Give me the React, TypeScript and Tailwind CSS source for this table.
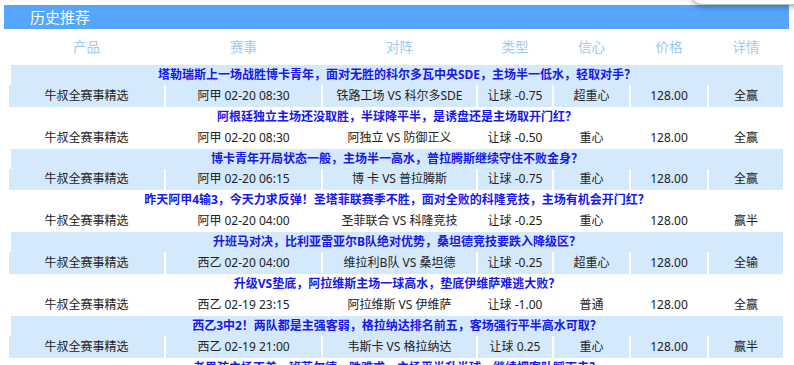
import React from 'react';

type Rec = {
  title: string;
  league?: string;
  match?: string;
  handicap?: string;
  level?: string;
  price?: string;
  result?: string;
};

const records: Rec[] = [
  {
    title: '塔勒瑞斯上一场战胜博卡青年，面对无胜的科尔多瓦中央SDE，主场半一低水，轻取对手？',
    league: '阿甲 02-20 08:30',
    match: '铁路工场 VS 科尔多SDE',
    handicap: '让球 -0.75',
    level: '超重心',
    price: '128.00',
    result: '全赢',
  },
  {
    title: '阿根廷独立主场还没取胜，半球降平半，是诱盘还是主场取开门红？',
    league: '阿甲 02-20 08:30',
    match: '阿独立 VS 防御正义',
    handicap: '让球 -0.50',
    level: '重心',
    price: '128.00',
    result: '全赢',
  },
  {
    title: '博卡青年开局状态一般，主场半一高水，普拉腾斯继续守住不败金身？',
    league: '阿甲 02-20 06:15',
    match: '博 卡 VS 普拉腾斯',
    handicap: '让球 -0.75',
    level: '重心',
    price: '128.00',
    result: '全赢',
  },
  {
    title: '昨天阿甲4输3，今天力求反弹！圣塔菲联赛季不胜，面对全败的科隆竞技，主场有机会开门红？',
    league: '阿甲 02-20 04:00',
    match: '圣菲联合 VS 科隆竞技',
    handicap: '让球 -0.25',
    level: '重心',
    price: '128.00',
    result: '赢半',
  },
  {
    title: '升班马对决，比利亚雷亚尔B队绝对优势，桑坦德竞技要跌入降级区？',
    league: '西乙 02-20 04:00',
    match: '维拉利B队 VS 桑坦德',
    handicap: '让球 -0.25',
    level: '超重心',
    price: '128.00',
    result: '全输',
  },
  {
    title: '升级VS垫底，阿拉维斯主场一球高水，垫底伊维萨难逃大败？',
    league: '西乙 02-19 23:15',
    match: '阿拉维斯 VS 伊维萨',
    handicap: '让球 -1.00',
    level: '普通',
    price: '128.00',
    result: '全赢',
  },
  {
    title: '西乙3中2！两队都是主强客弱，格拉纳达排名前五，客场强行平半高水可取？',
    league: '西乙 02-19 21:00',
    match: '韦斯卡 VS 格拉纳达',
    handicap: '让球 0.25',
    level: '重心',
    price: '128.00',
    result: '赢半',
  },
  {
    // only the top edge of this one shows in the viewport
    title: '老男孩主场不差，班菲尔德一胜难求，主场平半升半球，继续把客队踩下去？',
  },
];

const widths = ['w-[155px]', 'w-[155px]', 'w-[153px]', 'w-[74px]', 'w-[75px]', 'w-[76px]', 'w-[74px]'];
const heads = ['产品', '赛事', '对阵', '类型', '信心', '价格', '详情'];

function Record({ rec, shaded }: { rec: Rec; shaded: boolean }) {
  const bg = shaded ? 'bg-[#d5e9fd]' : 'bg-white';
  const cells = rec.league
    ? ['牛叔全赛事精选', rec.league, rec.match, rec.handicap, rec.level, rec.price, rec.result]
    : [];
  return (
    <div className="flex flex-col">
      <div
        className={`${bg} ml-[2px] h-[20px] flex items-center justify-center text-[12px] font-bold text-[#1717ee] whitespace-nowrap`}
      >
        {rec.title}
      </div>
      {cells.length > 0 && (
        <div className="flex gap-[2px] h-[21.8px]">
          {cells.map((c, i) => (
            <div
              key={i}
              className={`${widths[i]} ${bg} flex items-center justify-center text-[12px] text-[#222] whitespace-nowrap`}
            >
              {c}
            </div>
          ))}
        </div>
      )}
    </div>
  );
}

export default function App() {
  return (
    <div
      className="relative w-[794px] h-[365px] overflow-hidden bg-white pt-[5px]"
      style={{ fontFamily: '"Noto Sans", "Noto Sans CJK SC", sans-serif' }}
    >
      <div className="absolute left-[692px] top-[-30px] w-[130px] h-[34px] bg-white rounded-bl-[10px] shadow-[0_2px_7px_rgba(0,0,0,0.4)] z-10" />
      <div className="mx-[4px] w-[785px] h-[24px] bg-[#56a5ff] text-white text-[15px] pl-[26px] flex items-center">
        历史推荐
      </div>
      <div className="ml-[9px] w-[774px]">
        <div className="flex gap-[2px] h-[36px]">
          {heads.map((h, i) => (
            <div
              key={h}
              className={`${widths[i]} flex items-center justify-center text-[13.5px] text-[#a2c8ee]`}
            >
              {h}
            </div>
          ))}
        </div>
        {records.map((r, i) => (
          <Record key={i} rec={r} shaded={i % 2 === 0} />
        ))}
      </div>
    </div>
  );
}
